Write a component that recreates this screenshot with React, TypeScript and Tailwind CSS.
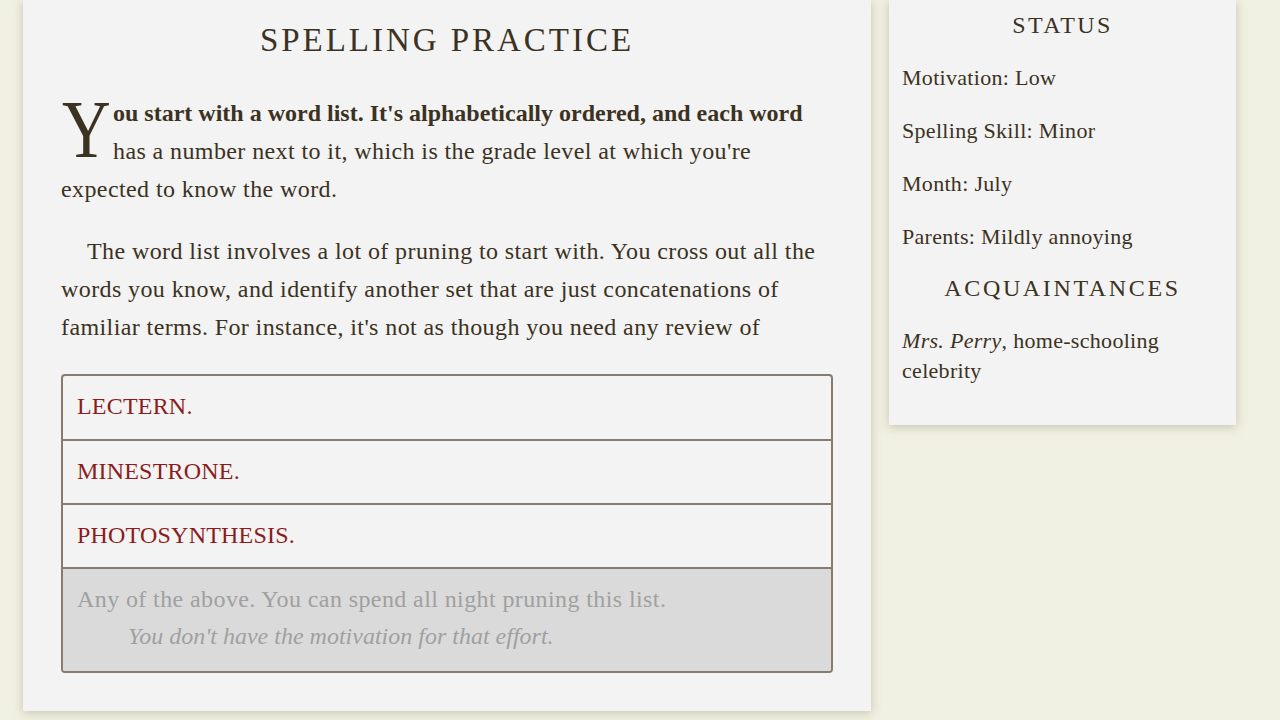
import React from "react";

const serif = { fontFamily: '"Liberation Serif", "DejaVu Serif", serif' };

function Choice({ label, first }: { label: string; first?: boolean }) {
  return (
    <div
      className={`${first ? "h-[65px]" : "h-[64px]"} flex items-center pl-[14px] pb-[3px] border-b-2 border-[#877b70] text-[#8b1c1c] text-[24px] tracking-[0.2px]`}
    >
      {label}
    </div>
  );
}

export default function App() {
  return (
    <div
      className="h-[720px] w-[1280px] overflow-hidden bg-[#f1f1e3] flex items-start gap-[18px] pl-[23px] text-[#3b3222]"
      style={serif}
    >
      {/* story column */}
      <main className="w-[848px] h-[711px] bg-[#f3f3f3] shadow-[0_2px_10px_rgba(120,110,80,0.35)] px-[38px] pt-[18px]">
        <h1 className="text-center text-[33px] tracking-[0.09em] leading-[44px]">
          SPELLING PRACTICE
        </h1>

        <p className="mt-[32px] text-[24px] leading-[38px] tracking-[0.4px]">
          <span className="float-left w-[51px] h-[64px] mt-[4px] ml-[1px] text-[82px] leading-[64px]">
            <span className="inline-block origin-left scale-x-[0.82]">Y</span>
          </span>
          <b className="tracking-[0px]">ou start with a word list. It's alphabetically ordered, and each word</b>
          <br />
          has a number next to it, which is the grade level at which you're
          <br />
          expected to know the word.
        </p>

        <p className="mt-[24px] text-[24px] leading-[38px] tracking-[0.4px] indent-[26px]">
          The word list involves a lot of pruning to start with. You cross out all the
          <br />
          words you know, and identify another set that are just concatenations of
          <br />
          familiar terms. For instance, it's not as though you need any review of
        </p>

        <div className="mt-[28px] border-2 border-[#877b70] rounded-[4px] overflow-hidden">
          <Choice label="LECTERN." first />
          <Choice label="MINESTRONE." />
          <Choice label="PHOTOSYNTHESIS." />
          <div className="bg-[#dadada] h-[102px] pl-[14px] pt-[12px] text-[#a0a0a0] text-[24px] tracking-[0.4px] leading-[37px]">
            <div>Any of the above. You can spend all night pruning this list.</div>
            <div className="italic pl-[51px] tracking-[0px]">You don't have the motivation for that effort.</div>
          </div>
        </div>
      </main>

      {/* status sidebar */}
      <aside className="w-[347px] h-[425px] bg-[#f3f3f3] shadow-[0_2px_10px_rgba(120,110,80,0.35)] px-[13px] pt-[8px] text-[22px] tracking-[0.3px]">
        <h2 className="text-center text-[24px] tracking-[0.1em] leading-[34px]">STATUS</h2>
        <div className="mt-[20px] flex flex-col gap-[21px] leading-[32px]">
          <div>Motivation: Low</div>
          <div>Spelling Skill: Minor</div>
          <div>Month: July</div>
          <div>Parents: Mildly annoying</div>
        </div>
        <h2 className="mt-[18px] text-center text-[24px] tracking-[0.11em] leading-[34px]">
          ACQUAINTANCES
        </h2>
        <p className="mt-[21px] leading-[30px]">
          <i>Mrs. Perry</i>, home-schooling
          <br />
          celebrity
        </p>
      </aside>
    </div>
  );
}
